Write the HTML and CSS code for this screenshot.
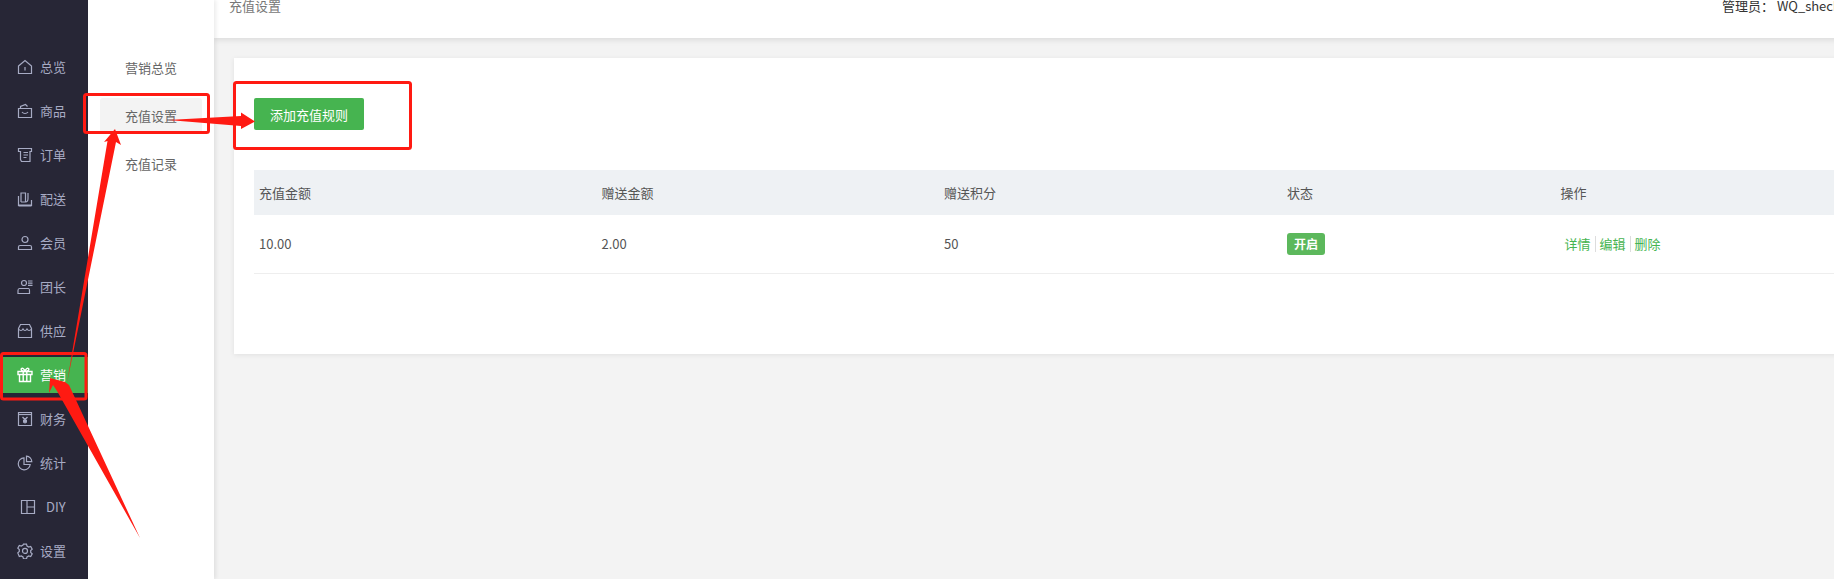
FILE: index.html
```html
<!DOCTYPE html>
<html lang="zh-CN">
<head>
<meta charset="utf-8">
<title>充值设置</title>
<link rel="stylesheet" href="styles.css">
</head>
<body>
<div class="shell">
  <nav class="rail">
    <a class="rail-item"><svg class="ico" viewBox="0 0 16 16"><path d="M1.500 7 8 1.500 14.500 7v7.500h-13z"/><path d="M8 8v3.500"/></svg><span>总览</span></a>
    <a class="rail-item"><svg class="ico" viewBox="0 0 16 16"><path d="M1.500 5.500h13v9h-13z"/><path d="M3.500 5.500V3.500L8.500 1.500l2 2"/><path d="M5 9c1.500 2 4.500 2 6 0"/></svg><span>商品</span></a>
    <a class="rail-item"><svg class="ico" viewBox="0 0 16 16"><path d="M1.500 1.500h13.000v3h-1.500v10h-8.500l-1-2v-8h-2z"/><path d="M6.500 5.500h4.500M6.500 8h4.500M6.500 10.500h3"/></svg><span>订单</span></a>
    <a class="rail-item"><svg class="ico" viewBox="0 0 16 16"><path d="M1.500 5v9.500h13V9"/><path d="M4 11V2h4.500v9"/><path d="M11 2v5.500c0 2-1 3.500-2.500 3.500H4"/><path d="M1.500 14.500h13" stroke-width="2"/></svg><span>配送</span></a>
    <a class="rail-item"><svg class="ico" viewBox="0 0 16 16"><circle cx="8" cy="4.500" r="3"/><path d="M1.500 14.500v-2.500c0-1 .8-1.500 1.500-1.500h10c.7 0 1.500.5 1.500 1.500v2.500z"/></svg><span>会员</span></a>
    <a class="rail-item"><svg class="ico" viewBox="0 0 16 16"><circle cx="7" cy="4" r="2.500"/><path d="M11 2h4.500M11 4.200h4.500M11 6.400h4.500"/><path d="M1 14.500v-3c0-1 .8-2 1.500-2h9c.7 0 1 1 1 2v3z"/></svg><span>团长</span></a>
    <a class="rail-item"><svg class="ico" viewBox="0 0 16 16"><path d="M3.500 1.500h9l2 4v9h-13v-9z"/><path d="M1.500 6c1.500 2 3.500 2 4.500 0 1 2 3 2 4 0 1 2 3 2 4.500 0"/></svg><span>供应</span></a>
    <a class="rail-item is-active"><svg class="ico ico-gift" viewBox="0 0 16 16"><path d="M2.500 7.500v7h11v-7"/><path d="M1 4.500h14v3H1z"/><path d="M6.200 4.500v10M9.800 4.500v10"/><path d="M8 4.500C5 4.500 3.500 3 4.500 1.500 5.500.5 7.500 2 8 4.500c.5-2.500 2.500-4 3.500-3C12.500 3 11 4.500 8 4.500z"/></svg><span>营销</span></a>
    <a class="rail-item"><svg class="ico" viewBox="0 0 16 16"><path d="M1.500 1.500h13v13h-13z"/><path d="M1.500 3.500h13"/><path d="M5.500 6 8 8.500 10.500 6M8 8.500V12.500M6 9.500h4M6 11h4" stroke-width="1.300"/></svg><span>财务</span></a>
    <a class="rail-item"><svg class="ico" viewBox="0 0 16 16"><path d="M7 2.800a6 6 0 1 0 6.200 6.700H7z"/><path d="M9.500 1.200a5.500 5.500 0 0 1 5.300 5.500H9.500z"/></svg><span>统计</span></a>
    <a class="rail-item"><svg class="ico ico-diy" viewBox="0 0 16 16"><path d="M1.500 1.500h13v13h-13z"/><path d="M7 1.500v13M7 8h7.500"/></svg><span>DIY</span></a>
    <a class="rail-item"><svg class="ico" viewBox="0 0 16 16"><path d="M6.500 1.500h3l.5 2 1.700 1 2-.6 1.500 2.600-1.500 1.500v1.800l1.500 1.500-1.500 2.600-2-.6-1.700 1-.5 2h-3l-.5-2-1.700-1-2 .6L.8 10.300l1.500-1.500V7L.8 5.500l1.500-2.600 2 .6 1.700-1z" transform="translate(0 -.4)"/><circle cx="8" cy="7.900" r="2.500"/></svg><span>设置</span></a>
  </nav>

  <aside class="subnav">
    <a class="subnav-item">营销总览</a>
    <a class="subnav-item is-active">充值设置</a>
    <a class="subnav-item">充值记录</a>
  </aside>

  <main class="main">
    <header class="topbar">
      <span class="crumb">充值设置</span>
      <span class="admin">管理员： WQ_shechang</span>
    </header>
    <div class="content">
      <section class="card">
        <button class="add-btn" type="button">添加充值规则</button>
        <table class="rules">
          <thead>
            <tr>
              <th class="col-money">充值金额</th>
              <th class="col-money">赠送金额</th>
              <th class="col-money">赠送积分</th>
              <th class="col-state">状态</th>
              <th>操作</th>
            </tr>
          </thead>
          <tbody>
            <tr>
              <td>10.00</td>
              <td>2.00</td>
              <td>50</td>
              <td class="cell-state"><span class="badge">开启</span></td>
              <td><div class="actions"><a>详情</a><a>编辑</a><a>删除</a></div></td>
            </tr>
          </tbody>
        </table>
      </section>
    </div>
  </main>
</div>

<svg class="annotations" viewBox="0 0 1834 579" aria-hidden="true">
  <rect class="mark" x="1.500" y="353.500" width="84.500" height="45.500" rx="2"/>
  <rect class="mark" x="84.500" y="94.500" width="124" height="38" rx="2"/>
  <rect class="mark" x="234.500" y="82.500" width="176" height="66" rx="2"/>
  <polygon class="arrow" points="67,383 107.500,141 104,142 115,129 121,145 116,142"/>
  <polygon class="arrow" points="168,120 241,116 241,112.500 255,121.500 241,129 241,126"/>
  <polygon class="arrow" points="140,538 69,385 65,382 50,378 49,393 53,385 57,391"/>
</svg>
</body>
</html>
```

FILE: styles.css
```css
* { box-sizing: border-box; }

html, body {
  margin: 0;
  height: 100%;
  overflow: hidden;
}

body {
  position: relative;
  background: #f3f3f3;
  font-family: "Noto Sans CJK SC", "Open Sans", sans-serif;
  font-size: 13px;
  color: #666;
}

a { text-decoration: none; color: inherit; }

.shell {
  display: flex;
  width: 2080px;
  height: 579px;
}

/* left rail */
.rail {
  flex: 0 0 88px;
  background: #272636;
  padding-top: 45px;
  color: #a7abc4;
}

.rail-item {
  display: flex;
  align-items: center;
  height: 36px;
  margin: 4px 0 8px;
  padding-left: 17px;
  gap: 7px;
  line-height: 36px;
}

.rail-item.is-active {
  background: #46b450;
  color: #fff;
}

.ico {
  flex: none;
  width: 16px;
  height: 16px;
  fill: none;
  stroke: currentColor;
  stroke-width: 1.200;
}

.ico-gift { stroke-width: 1.400; }

.ico-diy { margin-left: 3px; margin-right: 3px; }

/* secondary menu */
.subnav {
  flex: 0 0 126px;
  position: relative;
  z-index: 2;
  background: #fff;
  padding: 50px 12px 0;
  display: flex;
  flex-direction: column;
  gap: 12px;
  box-shadow: 2px 0 4px rgba(0, 0, 0, .08);
}

.subnav-item {
  height: 36px;
  line-height: 36px;
  padding-left: 25px;
  border-radius: 3px;
  color: #666;
}

.subnav-item.is-active { background: #f3f3f3; }

/* main */
.main {
  flex: 1;
  display: flex;
  flex-direction: column;
  min-width: 0;
}

.topbar {
  height: 38px;
  display: grid;
  grid-template-columns: 1493px 1fr;
  padding-left: 15px;
  background: #fff;
  line-height: 12px;
  box-shadow: 0 2px 6px rgba(0, 0, 0, .1);
  position: relative;
  z-index: 1;
}

.crumb { color: #777; }

.admin { color: #333; white-space: nowrap; }

.content { padding: 20px; }

.card {
  height: 296px;
  padding: 40px 20px 0;
  background: #fff;
  box-shadow: 0 1px 5px rgba(0, 0, 0, .08);
}

.add-btn {
  display: block;
  width: 110px;
  height: 32px;
  padding: 0;
  border: 0;
  border-radius: 2px;
  background: #46b450;
  color: #fff;
  font: inherit;
}

.rules {
  width: 100%;
  margin-top: 40px;
  border-collapse: collapse;
  table-layout: fixed;
  color: #555;
}

.rules th {
  height: 45px;
  padding: 0 0 0 5px;
  background: #eef1f4;
  font-weight: 400;
  text-align: left;
}

.rules td {
  height: 58px;
  padding: 0 0 0 5px;
  border-bottom: 1px solid #eee;
}

.col-money { width: 342.500px; }
.col-state { width: 274px; }

.rules .col-state,
.rules .cell-state { padding-left: 5.500px; }

.badge {
  display: inline-block;
  width: 38px;
  height: 22px;
  border-radius: 3px;
  background: #5cb85c;
  color: #fff;
  font-size: 12px;
  font-weight: 700;
  line-height: 22px;
  text-align: center;
  vertical-align: middle;
}

.actions {
  display: flex;
  padding-left: 4px;
  color: #46b450;
}

.actions a {
  line-height: 16px;
  padding-right: 4px;
  margin-right: 4px;
  border-right: 1px solid #ddd;
}

.actions a:last-child { border-right: 0; }

/* tutorial annotations over the screenshot */
.annotations {
  position: absolute;
  left: 0;
  top: 0;
  width: 1834px;
  height: 579px;
  z-index: 5;
  pointer-events: none;
}

.mark {
  fill: none;
  stroke: #ff1a12;
  stroke-width: 3;
}

.arrow { fill: #ff1a12; }
```
